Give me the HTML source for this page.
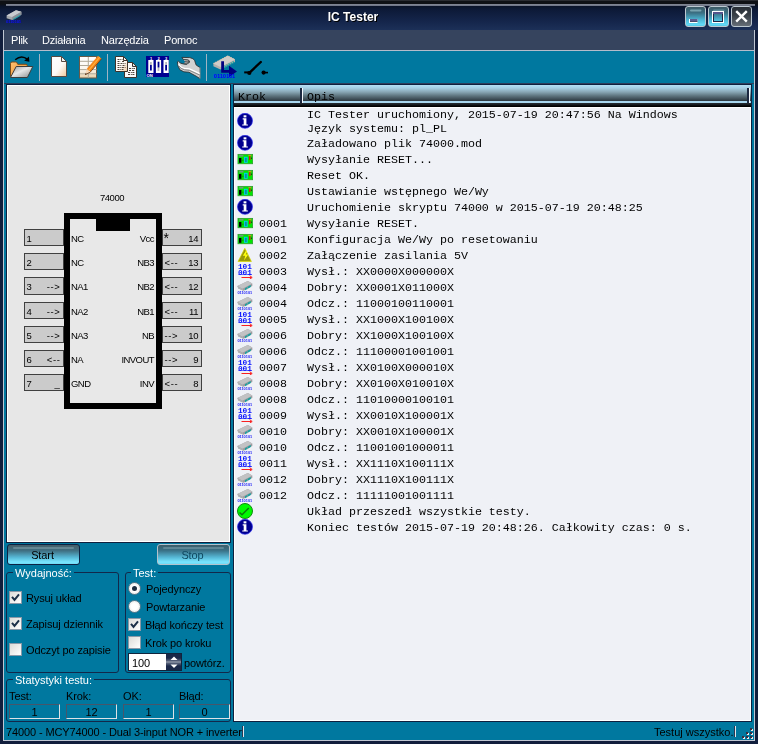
<!DOCTYPE html>
<html lang="pl"><head><meta charset="utf-8"><title>IC Tester</title>
<style>
*{box-sizing:border-box;margin:0;padding:0}
html,body{width:758px;height:744px;overflow:hidden;background:#111e3c}
body{position:relative;font-family:"Liberation Sans",sans-serif;font-size:11px;color:#000}
.abs{position:absolute}
.row,.lab,.leg,.lb,.pin,.btn,.stat,#menu span,#hdr span,#icname,#title .cap{will-change:transform}
#win{position:absolute;left:0;top:0;width:758px;height:744px;background:#111e3c;overflow:hidden}
#title{position:absolute;left:0;top:0;width:758px;height:30px;background:linear-gradient(#2a2c31 0,#2a2c31 1px,#0f1115 1px,#0f1115 4px,#0a1328 6px,#0d1a38 10px,#15264c 22px,#1c3058 30px)}
#title .hl{position:absolute;left:6px;top:4px;width:749px;height:2px;background:linear-gradient(#858a96,#6c7284)}
#title .cap{position:absolute;left:0;top:10px;width:706px;text-align:center;font-weight:bold;font-size:12px;color:#fff;line-height:14px;text-shadow:1px 1px 0 #000}
.wb{position:absolute;top:6px;width:21px;height:21px;border:1px solid #bcc8d0;border-radius:3px;background:linear-gradient(#3d5a66 0,#3a6e82 30%,#4cb8d6 68%,#62daf8 92%,#58c8e6 100%)}
.wb.cl{background:linear-gradient(#272d35 0,#394048 45%,#666e77 100%)}
#frameL{position:absolute;left:3px;top:30px;width:1px;height:711px;background:#bfc6d2}
#frameR{position:absolute;left:754px;top:30px;width:1px;height:711px;background:#bfc6d2}
#frameB{position:absolute;left:3px;top:740px;width:752px;height:1px;background:#bfc6d2}
#menu{position:absolute;left:4px;top:30px;width:750px;height:20px;background:#36445e;color:#fff}
#menu span{position:absolute;top:4px;line-height:13px;letter-spacing:-0.2px}
#menuline{position:absolute;left:4px;top:50px;width:750px;height:1px;background:#b4bccb}
#client{position:absolute;left:4px;top:51px;width:750px;height:689px;background:#00789f}
.tsep{position:absolute;top:54px;width:1px;height:27px;background:#9fb4c4}
#tbline{position:absolute;left:4px;top:83px;width:750px;height:1px;background:#2f3f5c}
#canvas{position:absolute;left:7px;top:85px;width:223px;height:457px;background:#e7e7e7;border:1px solid #fff}
#canvasfrm{position:absolute;left:6px;top:84px;width:225px;height:459px;background:#10203e}
/* list */
#listfrm{position:absolute;left:233px;top:84px;width:519px;height:638px;background:#10203e}
#list{position:absolute;left:234px;top:107px;width:517px;height:614px;background:#eff1f6;border:1px solid #fff}
#hdr{position:absolute;left:234px;top:85px;width:517px;height:18px;background:linear-gradient(#b4e0f6 0,#a6cfe4 3px,#88a6b4 7px,#5c727c 11px,#2c373f 16px,#a8d6ee 16px,#a8d6ee 18px)}
#hdrb{position:absolute;left:234px;top:103px;width:517px;height:4px;background:linear-gradient(#262c32 0,#14181c 2px,#000 3px,#000 4px)}
#hdr span{position:absolute;top:5px;font:11.67px/14px "Liberation Mono",monospace;color:#000}
.hsep{position:absolute;top:88px;width:3px;height:15px;background:linear-gradient(90deg,#1c2840 0,#1c2840 2px,#f4f8fc 2px);}
.row{position:absolute;left:234px;width:517px;height:16px;font:11.67px/14px "Liberation Mono",monospace;color:#000;white-space:nowrap}
.row.two{height:28px}
.row .ic{position:absolute;left:3px;top:0}
.row.two .ic{top:6px}
.row .st{position:absolute;left:25px;top:2px}
.row .tx{position:absolute;left:73px;top:2px}
.row.two .tx{top:1px}
/* IC */
#icname{position:absolute;left:62px;top:192px;width:100px;text-align:center;font-size:9.5px;line-height:12px;letter-spacing:-0.45px}
#icbody{position:absolute;left:64px;top:213px;width:98px;height:196px;border:6px solid #000;background:#e8e8e8}
#notch{position:absolute;left:96px;top:213px;width:34px;height:18px;background:#000}
.pin{position:absolute;width:40px;height:17px;background:#cbcbcb;border:1px solid #404040;font-size:9.5px;line-height:17px;letter-spacing:-0.45px}
.pl{left:24px}.pr{left:162px}
.pl .pn{position:absolute;left:1.5px;top:0}
.pl .pd{position:absolute;right:2.5px;top:0;letter-spacing:0.6px}
.pr .pn{position:absolute;right:3px;top:0}
.pr .pd{position:absolute;left:1.5px;top:0;letter-spacing:0.6px}
.lb{position:absolute;font-size:9.5px;line-height:17px;letter-spacing:-0.55px;white-space:nowrap}
.ll{left:71px}
.lr{left:68px;width:86px;text-align:right}
/* controls */
.btn{position:absolute;top:544px;width:73px;height:21px;border:1px solid #0c2244;border-radius:3px;text-align:center;line-height:21px;font-size:11px;padding-right:2px;letter-spacing:-0.1px}
.btn:before{content:"";position:absolute;left:5px;right:5px;top:2px;height:2px;border-radius:1px;background:rgba(190,215,222,.28)}
.grp{position:absolute;border:1px solid #12284a;border-radius:3px}
.leg{position:absolute;background:#00789f;color:#fff;line-height:13px;padding:0 2px;white-space:nowrap;margin-top:1px}
.cb{position:absolute;width:13px;height:13px;border:1px solid #8a99a8;background:linear-gradient(135deg,#dcdcd8,#fff);}
.cb svg{position:absolute;left:0;top:0}
.rb{position:absolute;width:13px;height:13px;border:1px solid #5c7c8e;border-radius:50%;background:radial-gradient(#fff 40%,#dcdcd8)}
.rb.on:after{content:"";position:absolute;left:3px;top:3px;width:5px;height:5px;border-radius:50%;background:#1c2d40}
.lab{position:absolute;line-height:13px;white-space:nowrap;margin-top:1px;letter-spacing:-0.12px}
.stat{position:absolute;top:704px;width:51px;height:15px;border:1px solid #47566a;border-right-color:#dde2e6;border-bottom-color:#dde2e6;text-align:center;line-height:13px;padding-top:1px}
#status{position:absolute;left:4px;top:722px;width:750px;height:18px;background:#00789f}
</style></head>
<body>
<div id="win">
<div id="title"><div class="hl"></div>
<svg class="abs" style="left:5px;top:9px" width="18" height="16" viewBox="0 0 18 16"><path d="M1.6 6.4L11 1.2l5.4 1.6v3L7.2 11 1.6 9.2z" fill="#a4a8ac"/><path d="M1.6 6.4L11 1.2l5.4 1.6L7.2 8z" fill="#c8ccd0"/><path d="M7.2 8l9.2-5.2v3L7.2 11z" fill="#8a9098"/><path d="M8.4 9.8l6.8-4v1.2l-6.8 4z" fill="#20a0a8"/><text x="1.500" y="14.400" font-family="Liberation Sans,sans-serif" font-weight="bold" font-size="4.400" fill="#0808f0" textLength="15" lengthAdjust="spacingAndGlyphs">0110101</text></svg>
<div class="cap">IC Tester</div>
<div class="wb" style="left:685px"><svg width="19" height="19" viewBox="0 0 19 19"><path d="M5 3.500h9.500" stroke="#86b2be" stroke-width="2" stroke-linecap="round" opacity=".8"/><rect x="3" y="12" width="8.500" height="4" fill="#fff"/><rect x="4" y="12" width="7.500" height="2.200" fill="#5c5c92"/><rect x="4" y="14.200" width="7.500" height=".800" fill="#23234a"/></svg></div>
<div class="wb" style="left:708px"><svg width="19" height="19" viewBox="0 0 19 19"><path d="M5 3.500h9.500" stroke="#86b2be" stroke-width="2" stroke-linecap="round" opacity=".5"/><rect x="3.500" y="4.500" width="11" height="11" fill="none" stroke="#fff" stroke-width="1"/><rect x="4.500" y="5.500" width="9" height="9" fill="none" stroke="#1e2444" stroke-width="1"/><rect x="4" y="5" width="10" height="2" fill="#55558c"/></svg></div>
<div class="wb cl" style="left:731px"><svg width="19" height="19" viewBox="0 0 19 19"><path d="M4.200 4.200l10.600 10.400M14.800 4.200l-10.600 10.400" stroke="#fff" stroke-width="2.400" fill="none"/></svg></div>
</div>
<div id="frameL"></div><div id="frameR"></div><div id="frameB"></div>
<div id="menu"><span style="left:7px">Plik</span><span style="left:38px">Działania</span><span style="left:97px">Narzędzia</span><span style="left:160px">Pomoc</span></div>
<div id="menuline"></div>
<div id="client"></div>
<div class="tsep" style="left:39px"></div><div class="tsep" style="left:107px"></div><div class="tsep" style="left:206px"></div>
<svg class="abs" style="left:4px;top:51px" width="270" height="32" viewBox="4 51 270 32">
<defs>
<linearGradient id="gFold" x1="0" y1="0" x2="1" y2="1"><stop offset="0" stop-color="#9a9a9a"/><stop offset=".45" stop-color="#e6e6e6"/><stop offset="1" stop-color="#8a8a8a"/></linearGradient>
<linearGradient id="gOr" x1="0" y1="0" x2="1" y2="1"><stop offset="0" stop-color="#ffc070"/><stop offset="1" stop-color="#e89030"/></linearGradient>
<linearGradient id="gDoc" x1="0" y1="0" x2="1" y2="1"><stop offset="0" stop-color="#ffffff"/><stop offset=".55" stop-color="#fdfaf6"/><stop offset="1" stop-color="#eec89c"/></linearGradient>
<linearGradient id="gSheet" x1="0" y1="0" x2="0" y2="1"><stop offset="0" stop-color="#ffffff"/><stop offset=".6" stop-color="#fbf6ee"/><stop offset="1" stop-color="#e6cfa8"/></linearGradient>
<linearGradient id="gPen" x1="0" y1="0" x2="1" y2="1"><stop offset="0" stop-color="#ffa030"/><stop offset="1" stop-color="#e86800"/></linearGradient>
<linearGradient id="gWr" x1="0" y1="0" x2="0" y2="1"><stop offset="0" stop-color="#8c8c8c"/><stop offset=".5" stop-color="#d8d8d8"/><stop offset="1" stop-color="#a0a0a0"/></linearGradient>
</defs>
<!-- open folder -->
<path d="M10.500 76.500V63.500q0-1.500 1.500-1.500h3.500q1.200 0 1.600 1l.6 1.300h8.300q1.200 0 1.200 1.200v1.500" fill="url(#gOr)" stroke="#7a4a18" stroke-width="1"/>
<path d="M10.500 77.500L16.200 66.500H32.800L27.400 77.500z" fill="url(#gFold)" stroke="#3c3c3c" stroke-width="1" stroke-linejoin="round"/>
<path d="M15.200 59.800Q21.500 54.400 27.600 59.400" fill="none" stroke="#000" stroke-width="1.500"/>
<path d="M28.900 56.400L29.400 61.800L24.200 60.700z" fill="#000"/>
<!-- new doc -->
<path d="M51.500 56.500H61.500L66.500 61.500V76.500H51.500z" fill="url(#gDoc)" stroke="#5a4a40" stroke-width="1" stroke-linejoin="round"/>
<path d="M61.500 56.500V61.500H66.500z" fill="#f4f4f4" stroke="#5a4a40" stroke-width="1" stroke-linejoin="round"/>
<!-- edit sheet -->
<rect x="79.500" y="56.500" width="17" height="21.500" fill="url(#gSheet)" stroke="#6a5a48" stroke-width="1"/>
<path d="M88.300 57V78M80 61.300H96.500M80 65.500H96.500M80 69.600H96.500M80 73.800H96.500" stroke="#b0a898" stroke-width="1" fill="none"/>
<path d="M86.700 69.100L98 55.700L101.600 58.700L90.300 72.100z" fill="url(#gPen)"/>
<path d="M88.500 70.600L99.800 57.200" stroke="#ffb040" stroke-width="1.200" fill="none"/>
<path d="M85 74.800L86.700 69.100L90.300 72.100z" fill="#f6d8b8"/>
<path d="M85 74.800L85.600 72.900L86.800 73.900z" fill="#2a2420"/>
<path d="M85 74.800L90.300 72.100L101.600 58.700" fill="none" stroke="#6a3810" stroke-width=".8"/>
<!-- copy -->
<g stroke="#3c342c" stroke-width="1" stroke-linejoin="round">
<path d="M124.500 62.500H132.500L136.500 66.500V77.500H124.500z" fill="#fafafa"/>
<path d="M132.500 62.500V66.500H136.500z" fill="#e8e8e8"/>
<path d="M115.500 56.500H123.500L127.500 60.500V71.500H115.500z" fill="url(#gDoc)"/>
<path d="M123.500 56.500V60.500H127.500z" fill="#eeeeee"/>
</g>
<path d="M117.500 59.500h5M117.500 61.500h3m1.500 0h2M117.500 63.500h2m1 0h5M117.500 65.500h4m1 0h3M117.500 67.500h8M117.500 69.500h6" stroke="#50463c" stroke-width="1" stroke-dasharray="2 .8 1 .6" fill="none"/>
<path d="M129 68.500h6M129 70.500h2m1 0h3M128 72.500h7M128 74.500h7" stroke="#50463c" stroke-width="1" stroke-dasharray="2 .8 1 .6" fill="none"/>
<!-- dip switch -->
<rect x="146" y="56" width="23" height="21" fill="#000090"/>
<g fill="#fff"><rect x="148.300" y="60" width="5.200" height="13"/><rect x="155.900" y="60" width="5.200" height="13"/><rect x="163.500" y="60" width="5.200" height="13"/></g>
<g fill="#b8b8c0"><rect x="150" y="62" width="1.800" height="3"/><rect x="157.600" y="67.500" width="1.800" height="3.500"/><rect x="165.200" y="62" width="1.800" height="3"/></g>
<g fill="#000090"><rect x="150" y="65" width="1.800" height="5.500"/><rect x="157.600" y="61.700" width="1.800" height="5.800"/><rect x="165.200" y="65" width="1.800" height="5.500"/></g>
<g font-family="Liberation Sans,sans-serif" font-size="4" fill="#fff" font-weight="bold"><text x="150" y="59.600">1</text><text x="157.500" y="59.600">2</text><text x="165" y="59.600">3</text><text x="146.600" y="76.600" font-size="4.200">ON</text></g>
<!-- wrench -->
<path d="M181.900 57.400L189.800 57.600Q193.500 58.500 194.600 60.300Q195.500 63.500 196.200 65.100L199.900 67.500V78.600L196.200 76.200L191.800 73.800L189 72.200L183.900 71.800L179.900 69.800L178 65.900L177.400 61.900L178.400 61.100L180.300 63.100L183.100 63.900L186.500 64.400L189.800 62L188.500 60L183 59.300z" fill="#d2d2d2" stroke="#262626" stroke-width=".8" stroke-linejoin="round"/>
<path d="M183 59.300L188.500 60L189.800 62L186.500 64.400L183.100 63.900L185.200 62z" fill="#5a5a5a"/>
<path d="M184 60.400L188 61M184.600 62.600L187.600 62.900" stroke="#c8c8c8" stroke-width=".7" fill="none"/>
<path d="M178.600 63.600Q180 67.400 184.500 68.400L189.500 68.900L199.900 73.600" stroke="#ffffff" stroke-width="1.300" fill="none"/>
<path d="M178.800 66Q180.600 69 184.500 69.800L189.300 70.300L199.900 75.200" stroke="#858585" stroke-width="1" fill="none"/>
<path d="M199.900 67.500V78.600" stroke="#d2d2d2" stroke-width=".8"/>
<!-- chip+arrow -->
<path d="M213.400 63.400L227.800 55.800L235 59.600V62L220.400 69.400L213.400 66.200z" fill="#b4b0ac"/>
<path d="M213.400 63.400L227.800 55.800L235 59.600L220.400 67z" fill="#d0ccc8"/>
<path d="M213.400 63.400L227.800 55.800L235 59.600" fill="none" stroke="#e0c4a8" stroke-width="1" stroke-dasharray="1 1"/>
<path d="M224.600 66.800L234.600 61.600" fill="none" stroke="#18a0a0" stroke-width="2.200" stroke-dasharray="1.300 1"/>
<path d="M221.200 61.200h2.800v8.800h5v-4.200L237 71.400L229 77v-4.200h-7.800z" fill="#000080"/>
<text x="213.800" y="77.800" font-family="Liberation Sans,sans-serif" font-weight="bold" font-size="5.200" fill="#0000ff" textLength="21.400" lengthAdjust="spacingAndGlyphs">0110101</text>
<path d="M221.200 61.200h2.800v8.800h5v-4.200L237 71.400L229 77v-4.200h-7.800z" fill="#000080" opacity=".0"/>
<!-- switch -->
<path d="M244.200 72.400H251" stroke="#000" stroke-width="2" fill="none"/>
<circle cx="249.300" cy="73" r="2.100" fill="#000"/>
<path d="M249.600 72.600L260.800 62" stroke="#000" stroke-width="2.400" stroke-linecap="round" fill="none"/>
<circle cx="263.600" cy="72.600" r="2.100" fill="#000"/>
<path d="M263.600 72.600H268" stroke="#000" stroke-width="1.600" fill="none"/>
</svg>

<div id="tbline"></div>
<div id="canvasfrm"></div>
<div id="canvas"></div>
<div id="icname">74000</div>
<div id="icbody"></div><div id="notch"></div>
<div class="pin pl" style="top:229px"><span class="pn">1</span><span class="pd"></span></div><div class="lb ll" style="top:230px">NC</div>
<div class="pin pl" style="top:253px"><span class="pn">2</span><span class="pd"></span></div><div class="lb ll" style="top:254px">NC</div>
<div class="pin pl" style="top:277px;height:18px"><span class="pn">3</span><span class="pd">--&gt;</span></div><div class="lb ll" style="top:278px">NA1</div>
<div class="pin pl" style="top:302px"><span class="pn">4</span><span class="pd">--&gt;</span></div><div class="lb ll" style="top:303px">NA2</div>
<div class="pin pl" style="top:326px"><span class="pn">5</span><span class="pd">--&gt;</span></div><div class="lb ll" style="top:327px">NA3</div>
<div class="pin pl" style="top:350px"><span class="pn">6</span><span class="pd">&lt;--</span></div><div class="lb ll" style="top:351px">NA</div>
<div class="pin pl" style="top:374px"><span class="pn">7</span><span class="pd">_</span></div><div class="lb ll" style="top:375px">GND</div>
<div class="pin pr" style="top:229px"><span class="pd" style="font-size:14px;line-height:14px;top:.500px;left:.500px">*</span><span class="pn">14</span></div><div class="lb lr" style="top:230px">Vcc</div>
<div class="pin pr" style="top:253px"><span class="pd">&lt;--</span><span class="pn">13</span></div><div class="lb lr" style="top:254px">NB3</div>
<div class="pin pr" style="top:277px;height:18px"><span class="pd">&lt;--</span><span class="pn">12</span></div><div class="lb lr" style="top:278px">NB2</div>
<div class="pin pr" style="top:302px"><span class="pd">&lt;--</span><span class="pn">11</span></div><div class="lb lr" style="top:303px">NB1</div>
<div class="pin pr" style="top:326px"><span class="pd">--&gt;</span><span class="pn">10</span></div><div class="lb lr" style="top:327px">NB</div>
<div class="pin pr" style="top:350px"><span class="pd">--&gt;</span><span class="pn">9</span></div><div class="lb lr" style="top:351px">INVOUT</div>
<div class="pin pr" style="top:374px"><span class="pd">&lt;--</span><span class="pn">8</span></div><div class="lb lr" style="top:375px">INV</div>
<div class="btn" style="left:7px;background:linear-gradient(#465e68 0,#3f6f82 30%,#56b8d6 65%,#7ae6ff 90%,#6fd8f2 100%)">Start</div>
<div class="btn" style="left:157px;border-color:#b4c2cc;background:linear-gradient(#3c5c68 0,#3a7288 30%,#56b8d6 65%,#7ae6ff 90%,#6fd8f2 100%);color:#0f4860">Stop</div>
<div class="grp" style="left:6px;top:572px;width:113px;height:101px"></div>
<div class="leg" style="left:13px;top:566px">Wydajność:</div>
<div class="cb on" style="left:9px;top:591px"><svg width="11" height="11" viewBox="0 0 11 11"><path d="M2 4.800L4.500 7.900L9 2.400" fill="none" stroke="#1c3048" stroke-width="2"/></svg></div><div class="lab" style="left:26px;top:591px">Rysuj układ</div>
<div class="cb on" style="left:9px;top:617px"><svg width="11" height="11" viewBox="0 0 11 11"><path d="M2 4.800L4.500 7.900L9 2.400" fill="none" stroke="#1c3048" stroke-width="2"/></svg></div><div class="lab" style="left:26px;top:617px">Zapisuj dziennik</div>
<div class="cb" style="left:9px;top:643px"></div><div class="lab" style="left:26px;top:643px">Odczyt po zapisie</div>
<div class="grp" style="left:125px;top:572px;width:106px;height:101px"></div>
<div class="leg" style="left:131px;top:566px">Test:</div>
<div class="rb on" style="left:128px;top:582px"></div><div class="lab" style="left:146px;top:582px">Pojedynczy</div>
<div class="rb" style="left:128px;top:600px"></div><div class="lab" style="left:146px;top:600px">Powtarzanie</div>
<div class="cb on" style="left:128px;top:618px"><svg width="11" height="11" viewBox="0 0 11 11"><path d="M2 4.800L4.500 7.900L9 2.400" fill="none" stroke="#1c3048" stroke-width="2"/></svg></div><div class="lab" style="left:145px;top:618px">Błąd kończy test</div>
<div class="cb" style="left:128px;top:636px"></div><div class="lab" style="left:145px;top:636px">Krok po kroku</div>
<div class="abs" style="left:128px;top:653px;width:54px;height:18px;border:1px solid #10243c;background:#fff"><span class="lab" style="left:3px;top:2px">100</span></div>
<div class="abs" style="left:166px;top:654px;width:15px;height:16px;background:linear-gradient(#1a2848 0,#1a2848 4px,#5a647c 7px,#9aa2b0 8px,#5a647c 9px,#1a2848 12px)"><svg width="15" height="16" viewBox="0 0 15 16"><path d="M4.500 6l3.500-3.500L11.500 6z" fill="#fff"/><path d="M4.500 10.500l3.500 3.500L11.500 10.500z" fill="#fff"/></svg></div>
<div class="lab" style="left:184px;top:656px">powtórz.</div>
<div class="grp" style="left:6px;top:679px;width:225px;height:43px"></div>
<div class="leg" style="left:13px;top:673px">Statystyki testu:</div>
<div class="lab" style="left:9px;top:689px">Test:</div><div class="lab" style="left:66px;top:689px">Krok:</div><div class="lab" style="left:123px;top:689px">OK:</div><div class="lab" style="left:179px;top:689px">Błąd:</div>
<div class="stat" style="left:9px">1</div><div class="stat" style="left:66px">12</div><div class="stat" style="left:123px">1</div><div class="stat" style="left:179px">0</div>
<div id="listfrm"></div>
<div id="hdr"><span style="left:4px">Krok</span><span style="left:73px">Opis</span></div>
<div id="hdrb"></div>
<div class="hsep" style="left:300px"></div><div class="hsep" style="left:747px"></div>
<div id="list"></div>
<div class="row two" style="top:107px"><svg class="ic" width="16" height="16" viewBox="0 0 16 16"><circle cx="8" cy="7.800" r="7.500" fill="#00008e" stroke="#2a2af0" stroke-width=".7"/><rect x="6.600" y="2.300" width="2.800" height="2.100" fill="#fff"/><path d="M5.700 5.300h3.700v6.100h1.500v1.200H5.200v-1.200h1.500V6.400H5.700z" fill="#fff"/></svg><span class="st"></span><span class="tx">IC Tester uruchomiony, 2015-07-19 20:47:56 Na Windows<br>Język systemu: pl_PL</span></div>
<div class="row" style="top:135px"><svg class="ic" width="16" height="16" viewBox="0 0 16 16"><circle cx="8" cy="7.800" r="7.500" fill="#00008e" stroke="#2a2af0" stroke-width=".7"/><rect x="6.600" y="2.300" width="2.800" height="2.100" fill="#fff"/><path d="M5.700 5.300h3.700v6.100h1.500v1.200H5.200v-1.200h1.500V6.400H5.700z" fill="#fff"/></svg><span class="st"></span><span class="tx">Załadowano plik 74000.mod</span></div>
<div class="row" style="top:151px"><svg class="ic" width="16" height="16" viewBox="0 0 16 16"><rect x="0.300" y="2.800" width="16" height="10.600" fill="#d8f0d8"/><rect x="1" y="3.500" width="14.700" height="9.200" fill="#00e600" stroke="#2e9e2e" stroke-width=".8"/><rect x="2.200" y="4.200" width="4.200" height="1.300" fill="#8a8a9a"/><rect x="2" y="7" width="2.400" height="4.800" fill="#000"/><rect x="5.300" y="8.600" width="1.100" height="1.600" fill="#0a8a0a"/><rect x="7" y="5.800" width="3.700" height="6" fill="#00d8e0"/><rect x="7.900" y="6.800" width="1.900" height="4.200" fill="#0a8ea6"/><rect x="11.400" y="4.200" width="3" height="1" fill="#f09020"/><rect x="12" y="5.300" width="1.500" height="3.700" fill="#e01808"/><rect x="14" y="6.600" width=".9" height="1.300" fill="#103010"/></svg><span class="st"></span><span class="tx">Wysyłanie RESET...</span></div>
<div class="row" style="top:167px"><svg class="ic" width="16" height="16" viewBox="0 0 16 16"><rect x="0.300" y="2.800" width="16" height="10.600" fill="#d8f0d8"/><rect x="1" y="3.500" width="14.700" height="9.200" fill="#00e600" stroke="#2e9e2e" stroke-width=".8"/><rect x="2.200" y="4.200" width="4.200" height="1.300" fill="#8a8a9a"/><rect x="2" y="7" width="2.400" height="4.800" fill="#000"/><rect x="5.300" y="8.600" width="1.100" height="1.600" fill="#0a8a0a"/><rect x="7" y="5.800" width="3.700" height="6" fill="#00d8e0"/><rect x="7.900" y="6.800" width="1.900" height="4.200" fill="#0a8ea6"/><rect x="11.400" y="4.200" width="3" height="1" fill="#f09020"/><rect x="12" y="5.300" width="1.500" height="3.700" fill="#e01808"/><rect x="14" y="6.600" width=".9" height="1.300" fill="#103010"/></svg><span class="st"></span><span class="tx">Reset OK.</span></div>
<div class="row" style="top:183px"><svg class="ic" width="16" height="16" viewBox="0 0 16 16"><rect x="0.300" y="2.800" width="16" height="10.600" fill="#d8f0d8"/><rect x="1" y="3.500" width="14.700" height="9.200" fill="#00e600" stroke="#2e9e2e" stroke-width=".8"/><rect x="2.200" y="4.200" width="4.200" height="1.300" fill="#8a8a9a"/><rect x="2" y="7" width="2.400" height="4.800" fill="#000"/><rect x="5.300" y="8.600" width="1.100" height="1.600" fill="#0a8a0a"/><rect x="7" y="5.800" width="3.700" height="6" fill="#00d8e0"/><rect x="7.900" y="6.800" width="1.900" height="4.200" fill="#0a8ea6"/><rect x="11.400" y="4.200" width="3" height="1" fill="#f09020"/><rect x="12" y="5.300" width="1.500" height="3.700" fill="#e01808"/><rect x="14" y="6.600" width=".9" height="1.300" fill="#103010"/></svg><span class="st"></span><span class="tx">Ustawianie wstępnego We/Wy</span></div>
<div class="row" style="top:199px"><svg class="ic" width="16" height="16" viewBox="0 0 16 16"><circle cx="8" cy="7.800" r="7.500" fill="#00008e" stroke="#2a2af0" stroke-width=".7"/><rect x="6.600" y="2.300" width="2.800" height="2.100" fill="#fff"/><path d="M5.700 5.300h3.700v6.100h1.500v1.200H5.200v-1.200h1.500V6.400H5.700z" fill="#fff"/></svg><span class="st"></span><span class="tx">Uruchomienie skryptu 74000 w 2015-07-19 20:48:25</span></div>
<div class="row" style="top:215px"><svg class="ic" width="16" height="16" viewBox="0 0 16 16"><rect x="0.300" y="2.800" width="16" height="10.600" fill="#d8f0d8"/><rect x="1" y="3.500" width="14.700" height="9.200" fill="#00e600" stroke="#2e9e2e" stroke-width=".8"/><rect x="2.200" y="4.200" width="4.200" height="1.300" fill="#8a8a9a"/><rect x="2" y="7" width="2.400" height="4.800" fill="#000"/><rect x="5.300" y="8.600" width="1.100" height="1.600" fill="#0a8a0a"/><rect x="7" y="5.800" width="3.700" height="6" fill="#00d8e0"/><rect x="7.900" y="6.800" width="1.900" height="4.200" fill="#0a8ea6"/><rect x="11.400" y="4.200" width="3" height="1" fill="#f09020"/><rect x="12" y="5.300" width="1.500" height="3.700" fill="#e01808"/><rect x="14" y="6.600" width=".9" height="1.300" fill="#103010"/></svg><span class="st">0001</span><span class="tx">Wysyłanie RESET.</span></div>
<div class="row" style="top:231px"><svg class="ic" width="16" height="16" viewBox="0 0 16 16"><rect x="0.300" y="2.800" width="16" height="10.600" fill="#d8f0d8"/><rect x="1" y="3.500" width="14.700" height="9.200" fill="#00e600" stroke="#2e9e2e" stroke-width=".8"/><rect x="2.200" y="4.200" width="4.200" height="1.300" fill="#8a8a9a"/><rect x="2" y="7" width="2.400" height="4.800" fill="#000"/><rect x="5.300" y="8.600" width="1.100" height="1.600" fill="#0a8a0a"/><rect x="7" y="5.800" width="3.700" height="6" fill="#00d8e0"/><rect x="7.900" y="6.800" width="1.900" height="4.200" fill="#0a8ea6"/><rect x="11.400" y="4.200" width="3" height="1" fill="#f09020"/><rect x="12" y="5.300" width="1.500" height="3.700" fill="#e01808"/><rect x="14" y="6.600" width=".9" height="1.300" fill="#103010"/></svg><span class="st">0001</span><span class="tx">Konfiguracja We/Wy po resetowaniu</span></div>
<div class="row" style="top:247px"><svg class="ic" width="16" height="16" viewBox="0 0 16 16"><path d="M7.800 1.300L1 14.500h13.400z" fill="#98980a" stroke="#d8d800" stroke-width=".7" stroke-linejoin="round"/><path d="M9 3.800L5.800 8.800h2.500L7 13.600l4.200-6.200H8.700L10.200 3.800z" fill="#ffff10"/></svg><span class="st">0002</span><span class="tx">Załączenie zasilania 5V</span></div>
<div class="row" style="top:263px"><svg class="ic" width="16" height="16" viewBox="0 0 16 16"><g font-family="Liberation Mono,monospace" font-weight="bold" font-size="7.800" fill="#0a14ff"><text x="0.900" y="5.800">101</text><text x="0.900" y="11.800">001</text></g><rect x="1.200" y="11.300" width="13.600" height="0.600" fill="#0a14ff"/><path d="M4.500 14.500h10M12.600 12.600l2.600 1.900-2.600 1.700" stroke="#f82020" stroke-width="1" fill="none"/></svg><span class="st">0003</span><span class="tx">Wysł.: XX0000X000000X</span></div>
<div class="row" style="top:279px"><svg class="ic" width="16" height="16" viewBox="0 0 16 16"><path d="M0.400 7L10.800 2.100l4.500 2.500v2.300L6.600 11.800 1.300 9.600z" fill="#9c9ca0"/><path d="M0.400 7L10.800 2.100l4.500 2.500L5.500 9.700z" fill="#c2c2c4"/><path d="M0.400 7L5.500 9.700l1.100 2.100L1.300 9.600z" fill="#b0b0b2"/><path d="M8 9.300l5.800-3.200v2L8 11.300z" fill="#18a0a0"/><path d="M10.400 8.200v2" stroke="#9c9ca0" stroke-width=".8"/><text x="0.400" y="15.400" font-family="Liberation Sans,sans-serif" font-weight="bold" font-size="4.400" fill="#1818f8" textLength="14.800" lengthAdjust="spacingAndGlyphs">0110101</text></svg><span class="st">0004</span><span class="tx">Dobry: XX0001X011000X</span></div>
<div class="row" style="top:295px"><svg class="ic" width="16" height="16" viewBox="0 0 16 16"><path d="M0.400 7L10.800 2.100l4.500 2.500v2.300L6.600 11.800 1.300 9.600z" fill="#9c9ca0"/><path d="M0.400 7L10.800 2.100l4.500 2.500L5.500 9.700z" fill="#c2c2c4"/><path d="M0.400 7L5.500 9.700l1.100 2.100L1.300 9.600z" fill="#b0b0b2"/><path d="M8 9.300l5.800-3.200v2L8 11.300z" fill="#18a0a0"/><path d="M10.400 8.200v2" stroke="#9c9ca0" stroke-width=".8"/><text x="0.400" y="15.400" font-family="Liberation Sans,sans-serif" font-weight="bold" font-size="4.400" fill="#1818f8" textLength="14.800" lengthAdjust="spacingAndGlyphs">0110101</text></svg><span class="st">0004</span><span class="tx">Odcz.: 11000100110001</span></div>
<div class="row" style="top:311px"><svg class="ic" width="16" height="16" viewBox="0 0 16 16"><g font-family="Liberation Mono,monospace" font-weight="bold" font-size="7.800" fill="#0a14ff"><text x="0.900" y="5.800">101</text><text x="0.900" y="11.800">001</text></g><rect x="1.200" y="11.300" width="13.600" height="0.600" fill="#0a14ff"/><path d="M4.500 14.500h10M12.600 12.600l2.600 1.900-2.600 1.700" stroke="#f82020" stroke-width="1" fill="none"/></svg><span class="st">0005</span><span class="tx">Wysł.: XX1000X100100X</span></div>
<div class="row" style="top:327px"><svg class="ic" width="16" height="16" viewBox="0 0 16 16"><path d="M0.400 7L10.800 2.100l4.500 2.500v2.300L6.600 11.800 1.300 9.600z" fill="#9c9ca0"/><path d="M0.400 7L10.800 2.100l4.500 2.500L5.500 9.700z" fill="#c2c2c4"/><path d="M0.400 7L5.500 9.700l1.100 2.100L1.300 9.600z" fill="#b0b0b2"/><path d="M8 9.300l5.800-3.200v2L8 11.300z" fill="#18a0a0"/><path d="M10.400 8.200v2" stroke="#9c9ca0" stroke-width=".8"/><text x="0.400" y="15.400" font-family="Liberation Sans,sans-serif" font-weight="bold" font-size="4.400" fill="#1818f8" textLength="14.800" lengthAdjust="spacingAndGlyphs">0110101</text></svg><span class="st">0006</span><span class="tx">Dobry: XX1000X100100X</span></div>
<div class="row" style="top:343px"><svg class="ic" width="16" height="16" viewBox="0 0 16 16"><path d="M0.400 7L10.800 2.100l4.500 2.500v2.300L6.600 11.800 1.300 9.600z" fill="#9c9ca0"/><path d="M0.400 7L10.800 2.100l4.500 2.500L5.500 9.700z" fill="#c2c2c4"/><path d="M0.400 7L5.500 9.700l1.100 2.100L1.300 9.600z" fill="#b0b0b2"/><path d="M8 9.300l5.800-3.200v2L8 11.300z" fill="#18a0a0"/><path d="M10.400 8.200v2" stroke="#9c9ca0" stroke-width=".8"/><text x="0.400" y="15.400" font-family="Liberation Sans,sans-serif" font-weight="bold" font-size="4.400" fill="#1818f8" textLength="14.800" lengthAdjust="spacingAndGlyphs">0110101</text></svg><span class="st">0006</span><span class="tx">Odcz.: 11100001001001</span></div>
<div class="row" style="top:359px"><svg class="ic" width="16" height="16" viewBox="0 0 16 16"><g font-family="Liberation Mono,monospace" font-weight="bold" font-size="7.800" fill="#0a14ff"><text x="0.900" y="5.800">101</text><text x="0.900" y="11.800">001</text></g><rect x="1.200" y="11.300" width="13.600" height="0.600" fill="#0a14ff"/><path d="M4.500 14.500h10M12.600 12.600l2.600 1.900-2.600 1.700" stroke="#f82020" stroke-width="1" fill="none"/></svg><span class="st">0007</span><span class="tx">Wysł.: XX0100X000010X</span></div>
<div class="row" style="top:375px"><svg class="ic" width="16" height="16" viewBox="0 0 16 16"><path d="M0.400 7L10.800 2.100l4.500 2.500v2.300L6.600 11.800 1.300 9.600z" fill="#9c9ca0"/><path d="M0.400 7L10.800 2.100l4.500 2.500L5.500 9.700z" fill="#c2c2c4"/><path d="M0.400 7L5.500 9.700l1.100 2.100L1.300 9.600z" fill="#b0b0b2"/><path d="M8 9.300l5.800-3.200v2L8 11.300z" fill="#18a0a0"/><path d="M10.400 8.200v2" stroke="#9c9ca0" stroke-width=".8"/><text x="0.400" y="15.400" font-family="Liberation Sans,sans-serif" font-weight="bold" font-size="4.400" fill="#1818f8" textLength="14.800" lengthAdjust="spacingAndGlyphs">0110101</text></svg><span class="st">0008</span><span class="tx">Dobry: XX0100X010010X</span></div>
<div class="row" style="top:391px"><svg class="ic" width="16" height="16" viewBox="0 0 16 16"><path d="M0.400 7L10.800 2.100l4.500 2.500v2.300L6.600 11.800 1.300 9.600z" fill="#9c9ca0"/><path d="M0.400 7L10.800 2.100l4.500 2.500L5.500 9.700z" fill="#c2c2c4"/><path d="M0.400 7L5.500 9.700l1.100 2.100L1.300 9.600z" fill="#b0b0b2"/><path d="M8 9.300l5.800-3.200v2L8 11.300z" fill="#18a0a0"/><path d="M10.400 8.200v2" stroke="#9c9ca0" stroke-width=".8"/><text x="0.400" y="15.400" font-family="Liberation Sans,sans-serif" font-weight="bold" font-size="4.400" fill="#1818f8" textLength="14.800" lengthAdjust="spacingAndGlyphs">0110101</text></svg><span class="st">0008</span><span class="tx">Odcz.: 11010000100101</span></div>
<div class="row" style="top:407px"><svg class="ic" width="16" height="16" viewBox="0 0 16 16"><g font-family="Liberation Mono,monospace" font-weight="bold" font-size="7.800" fill="#0a14ff"><text x="0.900" y="5.800">101</text><text x="0.900" y="11.800">001</text></g><rect x="1.200" y="11.300" width="13.600" height="0.600" fill="#0a14ff"/><path d="M4.500 14.500h10M12.600 12.600l2.600 1.900-2.600 1.700" stroke="#f82020" stroke-width="1" fill="none"/></svg><span class="st">0009</span><span class="tx">Wysł.: XX0010X100001X</span></div>
<div class="row" style="top:423px"><svg class="ic" width="16" height="16" viewBox="0 0 16 16"><path d="M0.400 7L10.800 2.100l4.500 2.500v2.300L6.600 11.800 1.300 9.600z" fill="#9c9ca0"/><path d="M0.400 7L10.800 2.100l4.500 2.500L5.500 9.700z" fill="#c2c2c4"/><path d="M0.400 7L5.500 9.700l1.100 2.100L1.300 9.600z" fill="#b0b0b2"/><path d="M8 9.300l5.800-3.200v2L8 11.300z" fill="#18a0a0"/><path d="M10.400 8.200v2" stroke="#9c9ca0" stroke-width=".8"/><text x="0.400" y="15.400" font-family="Liberation Sans,sans-serif" font-weight="bold" font-size="4.400" fill="#1818f8" textLength="14.800" lengthAdjust="spacingAndGlyphs">0110101</text></svg><span class="st">0010</span><span class="tx">Dobry: XX0010X100001X</span></div>
<div class="row" style="top:439px"><svg class="ic" width="16" height="16" viewBox="0 0 16 16"><path d="M0.400 7L10.800 2.100l4.500 2.500v2.300L6.600 11.800 1.300 9.600z" fill="#9c9ca0"/><path d="M0.400 7L10.800 2.100l4.500 2.500L5.500 9.700z" fill="#c2c2c4"/><path d="M0.400 7L5.500 9.700l1.100 2.100L1.300 9.600z" fill="#b0b0b2"/><path d="M8 9.300l5.800-3.200v2L8 11.300z" fill="#18a0a0"/><path d="M10.400 8.200v2" stroke="#9c9ca0" stroke-width=".8"/><text x="0.400" y="15.400" font-family="Liberation Sans,sans-serif" font-weight="bold" font-size="4.400" fill="#1818f8" textLength="14.800" lengthAdjust="spacingAndGlyphs">0110101</text></svg><span class="st">0010</span><span class="tx">Odcz.: 11001001000011</span></div>
<div class="row" style="top:455px"><svg class="ic" width="16" height="16" viewBox="0 0 16 16"><g font-family="Liberation Mono,monospace" font-weight="bold" font-size="7.800" fill="#0a14ff"><text x="0.900" y="5.800">101</text><text x="0.900" y="11.800">001</text></g><rect x="1.200" y="11.300" width="13.600" height="0.600" fill="#0a14ff"/><path d="M4.500 14.500h10M12.600 12.600l2.600 1.900-2.600 1.700" stroke="#f82020" stroke-width="1" fill="none"/></svg><span class="st">0011</span><span class="tx">Wysł.: XX1110X100111X</span></div>
<div class="row" style="top:471px"><svg class="ic" width="16" height="16" viewBox="0 0 16 16"><path d="M0.400 7L10.800 2.100l4.500 2.500v2.300L6.600 11.800 1.300 9.600z" fill="#9c9ca0"/><path d="M0.400 7L10.800 2.100l4.500 2.500L5.500 9.700z" fill="#c2c2c4"/><path d="M0.400 7L5.500 9.700l1.100 2.100L1.300 9.600z" fill="#b0b0b2"/><path d="M8 9.300l5.800-3.200v2L8 11.300z" fill="#18a0a0"/><path d="M10.400 8.200v2" stroke="#9c9ca0" stroke-width=".8"/><text x="0.400" y="15.400" font-family="Liberation Sans,sans-serif" font-weight="bold" font-size="4.400" fill="#1818f8" textLength="14.800" lengthAdjust="spacingAndGlyphs">0110101</text></svg><span class="st">0012</span><span class="tx">Dobry: XX1110X100111X</span></div>
<div class="row" style="top:487px"><svg class="ic" width="16" height="16" viewBox="0 0 16 16"><path d="M0.400 7L10.800 2.100l4.500 2.500v2.300L6.600 11.800 1.300 9.600z" fill="#9c9ca0"/><path d="M0.400 7L10.800 2.100l4.500 2.500L5.500 9.700z" fill="#c2c2c4"/><path d="M0.400 7L5.500 9.700l1.100 2.100L1.300 9.600z" fill="#b0b0b2"/><path d="M8 9.300l5.800-3.200v2L8 11.300z" fill="#18a0a0"/><path d="M10.400 8.200v2" stroke="#9c9ca0" stroke-width=".8"/><text x="0.400" y="15.400" font-family="Liberation Sans,sans-serif" font-weight="bold" font-size="4.400" fill="#1818f8" textLength="14.800" lengthAdjust="spacingAndGlyphs">0110101</text></svg><span class="st">0012</span><span class="tx">Odcz.: 11111001001111</span></div>
<div class="row" style="top:503px"><svg class="ic" width="16" height="16" viewBox="0 0 16 16"><circle cx="8" cy="8" r="7.500" fill="#00fa00" stroke="#0f8a0f" stroke-width="1"/><path d="M2.600 9.400L5 11.800L11.800 5" stroke="#0a7a0a" stroke-width="1.400" fill="none"/></svg><span class="st"></span><span class="tx">Układ przeszedł wszystkie testy.</span></div>
<div class="row" style="top:519px"><svg class="ic" width="16" height="16" viewBox="0 0 16 16"><circle cx="8" cy="7.800" r="7.500" fill="#00008e" stroke="#2a2af0" stroke-width=".7"/><rect x="6.600" y="2.300" width="2.800" height="2.100" fill="#fff"/><path d="M5.700 5.300h3.700v6.100h1.500v1.200H5.200v-1.200h1.500V6.400H5.700z" fill="#fff"/></svg><span class="st"></span><span class="tx">Koniec testów 2015-07-19 20:48:26. Całkowity czas: 0 s.</span></div>
<div id="status"><span class="lab" style="left:2px;top:3px">74000 - MCY74000 - Dual 3-input NOR + inverter</span><span class="lab" style="right:21px;top:3px;letter-spacing:0">Testuj wszystko.</span>
<div class="abs" style="left:238px;top:4px;width:2px;height:11px;background:linear-gradient(90deg,#2a3650 0,#2a3650 1px,#dfe6ec 1px)"></div>
<div class="abs" style="left:730px;top:4px;width:2px;height:11px;background:linear-gradient(90deg,#2a3650 0,#2a3650 1px,#dfe6ec 1px)"></div>
<svg class="abs" style="left:738px;top:6px" width="12" height="12" viewBox="0 0 12 12" shape-rendering="crispEdges"><g fill="#f4e8e6"><rect x="9" y="1" width="2" height="2"/><rect x="5" y="5" width="2" height="2"/><rect x="9" y="5" width="2" height="2"/><rect x="1" y="9" width="2" height="2"/><rect x="5" y="9" width="2" height="2"/><rect x="9" y="9" width="2" height="2"/></g><g fill="#3a2c3e"><rect x="8" y="0" width="2" height="2"/><rect x="4" y="4" width="2" height="2"/><rect x="8" y="4" width="2" height="2"/><rect x="0" y="8" width="2" height="2"/><rect x="4" y="8" width="2" height="2"/><rect x="8" y="8" width="2" height="2"/></g></svg>
</div>
</div>
</body></html>
